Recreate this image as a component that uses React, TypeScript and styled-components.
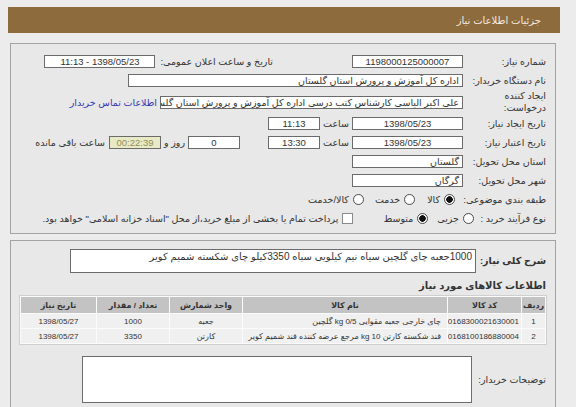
import React from "react";
import styled, { createGlobalStyle, css } from "styled-components";

const GlobalStyle = createGlobalStyle`
  html, body {
    margin: 0;
    padding: 0;
    background: #ececec;
  }
  body {
    font-family: "Liberation Sans", "DejaVu Sans", sans-serif;
    font-size: 9.5px;
    color: #333;
  }
`;

const Page = styled.div`
  width: 552px;
  margin-left: 8px;
  padding-top: 7px;
  direction: rtl;
`;

const TitleBar = styled.div`
  height: 26px;
  background: #8d6b3d;
  color: #f3ece0;
  display: flex;
  align-items: center;
  padding-right: 19px;
  font-size: 10px;
`;

const Panel = styled.section<{ $top: number; $bottom?: number }>`
  margin: ${(p) => p.$top}px 4px 0 2px;
  border: 1px solid #a3a3a3;
  background: #e8e8e8;
  padding: 8px 9px ${(p) => p.$bottom ?? 5}px 9px;
`;

const Row = styled.div<{ $h?: number }>`
  display: flex;
  align-items: center;
  height: ${(p) => p.$h ?? 19}px;
`;

const Label = styled.div<{ $w?: number; $bold?: boolean }>`
  width: ${(p) => p.$w ?? 83}px;
  flex: none;
  white-space: nowrap;
  line-height: 12px;
  ${(p) =>
    p.$bold &&
    css`
      font-weight: bold;
      font-size: 9.5px;
    `}
`;

const Text = styled.span<{ $before?: number; $w?: number; $center?: boolean }>`
  flex: none;
  white-space: nowrap;
  margin-inline-start: ${(p) => p.$before ?? 0}px;
  ${(p) => p.$w && css`width: ${p.$w}px;`}
  text-align: ${(p) => (p.$center ? "center" : "right")};
`;

const Field = styled.div<{ $w: number; $before?: number; $center?: boolean; $muted?: boolean }>`
  flex: none;
  box-sizing: border-box;
  width: ${(p) => p.$w}px;
  height: 13px;
  line-height: 11px;
  margin-inline-start: ${(p) => p.$before ?? 0}px;
  padding: 0 3px;
  border: 1px solid #6b6b6b;
  background: ${(p) => (p.$muted ? "#e9e9c6" : "#fff")};
  color: ${(p) => (p.$muted ? "#8f8f58" : "#333")};
  text-align: ${(p) => (p.$center ? "center" : "right")};
  white-space: nowrap;
  overflow: hidden;
`;

const Link = styled.a`
  flex: none;
  margin-inline-start: 3px;
  color: #3636b4;
  text-decoration: none;
  white-space: nowrap;
`;

const Options = styled.div<{ $before?: number }>`
  display: flex;
  align-items: center;
  margin-inline-start: ${(p) => p.$before ?? 0}px;
`;

const Option = styled.label<{ $before?: number }>`
  display: flex;
  align-items: center;
  gap: 4px;
  margin-inline-start: ${(p) => p.$before ?? 0}px;
  white-space: nowrap;
`;

const Radio = styled.span<{ $on?: boolean }>`
  flex: none;
  box-sizing: border-box;
  width: 11px;
  height: 11px;
  border-radius: 50%;
  border: 1px solid #4a4a4a;
  background: ${(p) =>
    p.$on ? "radial-gradient(circle, #111 0 3px, #fff 3.5px)" : "#fff"};
`;

const Check = styled.span`
  flex: none;
  box-sizing: border-box;
  width: 11px;
  height: 11px;
  border: 1px solid #8a8a8a;
  background: #fff;
`;

const Summary = styled.div`
  flex: none;
  box-sizing: border-box;
  width: 406px;
  height: 24px;
  padding: 1px 3px;
  border: 1px solid #6b6b6b;
  background: #fff;
  font-size: 10px;
  line-height: 12px;
  white-space: nowrap;
  overflow: hidden;
`;

const SectionTitle = styled.div`
  margin-top: 7px;
  margin-bottom: 4px;
  font-weight: bold;
  font-size: 10px;
  line-height: 12px;
`;

const Table = styled.table`
  width: 100%;
  table-layout: fixed;
  border-collapse: separate;
  border-spacing: 1px;
  background: #fbfbfb;
  outline: 1px solid #cfcfcf;
  font-size: 8px;
`;

const Th = styled.th<{ $w?: number }>`
  ${(p) => p.$w && css`width: ${p.$w}px;`}
  height: 16px;
  padding: 0;
  background: #c3c3c3;
  color: #333;
  font-weight: bold;
  text-align: center;
  white-space: nowrap;
`;

const Td = styled.td<{ $right?: boolean }>`
  height: 14px;
  padding: 0 ${(p) => (p.$right ? 6 : 2)}px;
  background: #f0f0f0;
  color: #333;
  text-align: ${(p) => (p.$right ? "right" : "center")};
  white-space: nowrap;
  overflow: hidden;
`;

const NotesRow = styled.div`
  display: flex;
  align-items: center;
  margin-top: 12px;
`;

const Notes = styled.div`
  flex: none;
  box-sizing: border-box;
  width: 390px;
  height: 47px;
  border: 1px solid #6b6b6b;
  background: #fff;
`;

const items = [
  {
    idx: "1",
    code: "0168300021630001",
    name: "چای خارجی جعبه مقوایی 0/5 kg گلچین",
    unit: "جعبه",
    qty: "1000",
    date: "1398/05/27",
  },
  {
    idx: "2",
    code: "0168100186880004",
    name: "قند شکسته کارتن 10 kg مرجع عرضه کننده قند شمیم کویر",
    unit: "کارتن",
    qty: "3350",
    date: "1398/05/27",
  },
];

export default function App() {
  return (
    <>
      <GlobalStyle />
      <Page>
        <TitleBar>جزئیات اطلاعات نیاز</TitleBar>

        <Panel $top={10}>
          <Row>
            <Label>شماره نیاز:</Label>
            <Field $w={111} $center>1198000125000007</Field>
            <Text $before={79}>تاریخ و ساعت اعلان عمومی:</Text>
            <Field $w={111} $before={5} $center>1398/05/23 - 11:13</Field>
          </Row>
          <Row>
            <Label>نام دستگاه خریدار:</Label>
            <Field $w={335}>اداره کل آموزش و پرورش استان گلستان</Field>
          </Row>
          <Row $h={24}>
            <Label>
              ایجاد کننده
              <br />
              درخواست:
            </Label>
            <Field $w={303}>
              علی اکبر الیاسی کارشناس کتب درسی اداره کل آموزش و پرورش استان گلستان
            </Field>
            <Link href="#">اطلاعات تماس خریدار</Link>
          </Row>
          <Row>
            <Label>تاریخ ایجاد نیاز:</Label>
            <Field $w={111} $center>1398/05/23</Field>
            <Text $w={32} $center>ساعت</Text>
            <Field $w={52} $center>11:13</Field>
          </Row>
          <Row>
            <Label>تاریخ اعتبار نیاز:</Label>
            <Field $w={111} $center>1398/05/23</Field>
            <Text $w={32} $center>ساعت</Text>
            <Field $w={52} $center>13:30</Field>
            <Field $w={52} $before={28} $center>0</Field>
            <Text $w={27} $center>روز و</Text>
            <Field $w={52} $center $muted>00:22:39</Field>
            <Text $before={4}>ساعت باقی مانده</Text>
          </Row>
          <Row>
            <Label>استان محل تحویل:</Label>
            <Field $w={111}>گلستان</Field>
          </Row>
          <Row>
            <Label>شهر محل تحویل:</Label>
            <Field $w={111}>گرگان</Field>
          </Row>
          <Row>
            <Label>طبقه بندی موضوعی:</Label>
            <Options $before={8}>
              <Option>
                <Radio $on />
                کالا
              </Option>
              <Option $before={12}>
                <Radio />
                خدمت
              </Option>
              <Option $before={11}>
                <Radio />
                کالا/خدمت
              </Option>
            </Options>
          </Row>
          <Row>
            <Label $w={72}>نوع فرآیند خرید :</Label>
            <Options>
              <Option>
                <Radio />
                جزیی
              </Option>
              <Option $before={9}>
                <Radio $on />
                متوسط
              </Option>
              <Option $before={30}>
                <Check />
                پرداخت تمام یا بخشی از مبلغ خرید،از محل "اسناد خزانه اسلامی" خواهد بود.
              </Option>
            </Options>
          </Row>
        </Panel>

        <Panel $top={6} $bottom={12}>
          <Row $h={24}>
            <Label $w={70} $bold>
              شرح کلی نیاز:
            </Label>
            <Summary>1000جعبه چای گلچین سیاه نیم کیلویی سیاه 3350کیلو چای شکسته شمیم کویر</Summary>
          </Row>

          <SectionTitle>اطلاعات کالاهای مورد نیاز</SectionTitle>
          <Table>
            <thead>
              <tr>
                <Th $w={23}>ردیف</Th>
                <Th $w={73}>کد کالا</Th>
                <Th $w={204}>نام کالا</Th>
                <Th $w={72}>واحد شمارش</Th>
                <Th $w={72}>تعداد / مقدار</Th>
                <Th>تاریخ نیاز</Th>
              </tr>
            </thead>
            <tbody>
              {items.map((it) => (
                <tr key={it.idx}>
                  <Td>{it.idx}</Td>
                  <Td>{it.code}</Td>
                  <Td $right>{it.name}</Td>
                  <Td>{it.unit}</Td>
                  <Td>{it.qty}</Td>
                  <Td>{it.date}</Td>
                </tr>
              ))}
            </tbody>
          </Table>

          <NotesRow>
            <Label $w={74}>توضیحات خریدار:</Label>
            <Notes />
          </NotesRow>
        </Panel>
      </Page>
    </>
  );
}
